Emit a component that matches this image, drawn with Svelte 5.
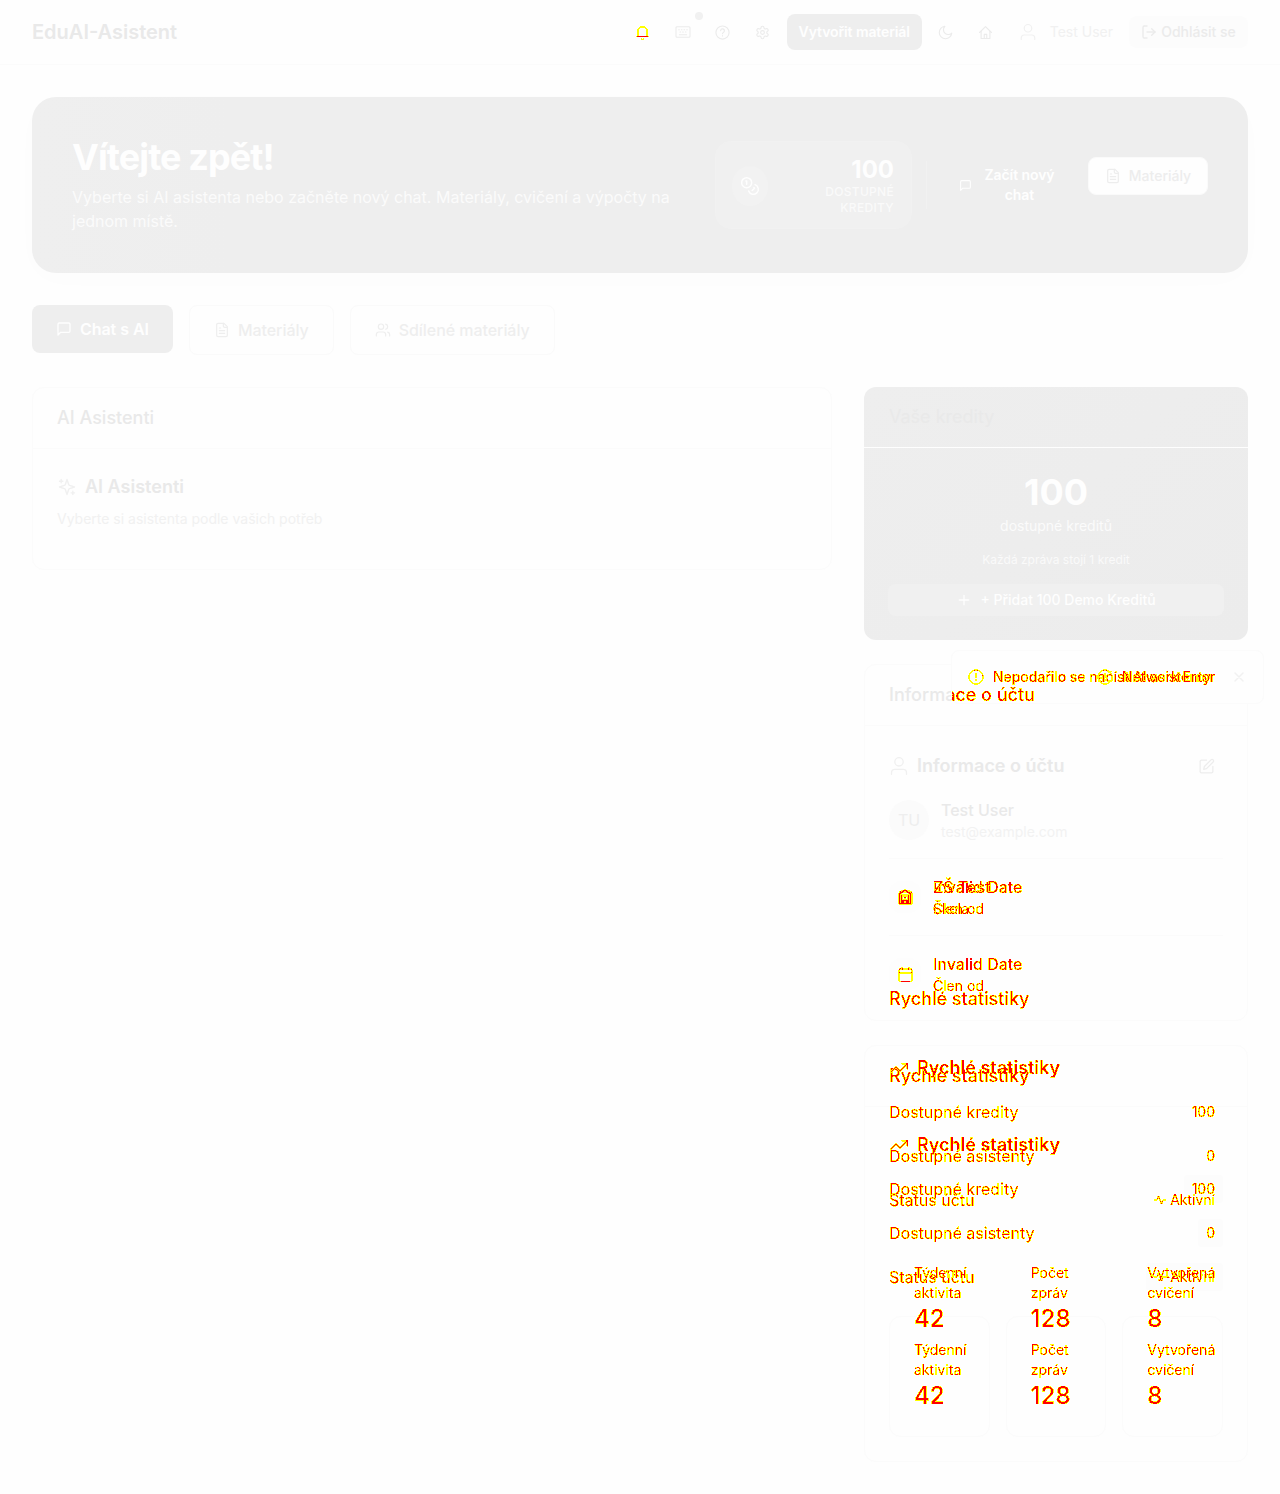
<script>
  const icons = {
    bell: ['M4.500 18.500V10.500a7.500 7.500 0 0 1 15 0v8', 'M2.500 18.500h19', 'M10 22a2.500 2.500 0 0 0 4 0'],
    keyboard: ['M3 4h18a1.5 1.5 0 0 1 1.500 1.500v13a1.500 1.500 0 0 1-1.500 1.500H3a1.500 1.500 0 0 1-1.500-1.500v-13A1.500 1.500 0 0 1 3 4z', 'M5.500 8.500h1M9.500 8.500h1M13.500 8.500h1M17.500 8.500h1M7.500 12h1M11.500 12h1M15.500 12h1M6.500 16h11'],
    help: ['M12 1.500a10.500 10.500 0 1 0 0 21a10.500 10.500 0 1 0 0-21', 'M9 9a3 3 0 0 1 6 .5c0 2-3 2.500-3 4.500', 'M12 17v.5'],
    settings: ['M12.220 2h-.440a2 2 0 0 0-2 2v.180a2 2 0 0 1-1 1.730l-.430.250a2 2 0 0 1-2 0l-.150-.080a2 2 0 0 0-2.730.730l-.220.380a2 2 0 0 0 .730 2.730l.150.100a2 2 0 0 1 1 1.720v.510a2 2 0 0 1-1 1.740l-.150.090a2 2 0 0 0-.730 2.730l.220.380a2 2 0 0 0 2.730.730l.150-.080a2 2 0 0 1 2 0l.430.250a2 2 0 0 1 1 1.730V20a2 2 0 0 0 2 2h.440a2 2 0 0 0 2-2v-.180a2 2 0 0 1 1-1.730l.430-.250a2 2 0 0 1 2 0l.150.080a2 2 0 0 0 2.730-.730l.220-.390a2 2 0 0 0-.730-2.730l-.150-.080a2 2 0 0 1-1-1.740v-.500a2 2 0 0 1 1-1.740l.150-.090a2 2 0 0 0 .730-2.730l-.220-.380a2 2 0 0 0-2.730-.730l-.150.080a2 2 0 0 1-2 0l-.430-.250a2 2 0 0 1-1-1.730V4a2 2 0 0 0-2-2z', 'M12 9a3 3 0 1 0 0 6a3 3 0 1 0 0-6'],
    moon: ['M11 2a7.500 7.500 0 0 0 11 11A10 10 0 1 1 11 2z'],
    home: ['M2.500 12L12 2.500L21.500 12', 'M5 10v11.500h14V10', 'M10 21v-6h4v6'],
    user: ['M12 2a5 5 0 1 0 0 10a5 5 0 1 0 0-10', 'M3 22v-2a4 4 0 0 1 4-4h10a4 4 0 0 1 4 4v2'],
    logout: ['M9 21H5a2 2 0 0 1-2-2V5a2 2 0 0 1 2-2h4', 'M16 17l5-5-5-5', 'M21 12H9'],
    coins: ['M8 2a6 6 0 1 0 0 12a6 6 0 1 0 0-12', 'M18.090 10.370A6 6 0 1 1 10.340 18', 'M7 6h1v4', 'M16.710 13.880l.700.710-2.820 2.820'],
    chat: ['M21 15a2 2 0 0 1-2 2H7l-4 4V5a2 2 0 0 1 2-2h14a2 2 0 0 1 2 2z'],
    file: ['M15 2H6a2 2 0 0 0-2 2v16a2 2 0 0 0 2 2h12a2 2 0 0 0 2-2V7z', 'M14 2v4a2 2 0 0 0 2 2h4', 'M10 9H8M16 13H8M16 17H8'],
    users: ['M16 21v-2a4 4 0 0 0-4-4H6a4 4 0 0 0-4 4v2', 'M9 3a4 4 0 1 0 0 8a4 4 0 1 0 0-8', 'M22 21v-2a4 4 0 0 0-3-3.870', 'M16 3.130a4 4 0 0 1 0 7.750'],
    sparkles: ['M12 3l1.900 5.800a2 2 0 0 0 1.300 1.300L21 12l-5.800 1.900a2 2 0 0 0-1.300 1.300L12 21l-1.900-5.800a2 2 0 0 0-1.300-1.300L3 12l5.800-1.900a2 2 0 0 0 1.300-1.300z', 'M5 3v4M3 5h4M19 17v4M17 19h4'],
    plus: ['M5 12h14M12 5v14'],
    edit: ['M12 3H5a2 2 0 0 0-2 2v14a2 2 0 0 0 2 2h14a2 2 0 0 0 2-2v-7', 'M18.400 2.600a2.100 2.100 0 0 1 3 3L12 15l-4 1 1-4z'],
    alert: ['M12 1.500a10.500 10.500 0 1 0 0 21a10.500 10.500 0 1 0 0-21', 'M12 7v6M12 16.500v.5'],
    close: ['M18 6L6 18M6 6l12 12'],
    calendar: ['M5 4h14a2 2 0 0 1 2 2v14a2 2 0 0 1-2 2H5a2 2 0 0 1-2-2V6a2 2 0 0 1 2-2z', 'M3 9.500h18M7.500 2v3M16.500 2v3'],
    building: ['M4 22V7l8-5 8 5v15z', 'M7 9v13M17 9v13M9 22v-5h6v5', 'M10 9h4M12 12v2'],
    trend: ['M22 7l-8.500 8.500-5-5L2 17', 'M16 7h6v6'],
    activity: ['M22 12h-4l-3 8L9 4l-3 8H2']
  };
  const stats = [['Týdenní aktivita', '42'], ['Počet zpráv', '128'], ['Vytvořená cvičení', '8']];
</script>

{#snippet icon(name, size = 16, weight = 2)}
  <svg class="icon" width={size} height={size} viewBox="0 0 24 24" stroke-width={weight}>
    {#each icons[name] as d}<path {d} />{/each}
  </svg>
{/snippet}

{#snippet statistics()}
  <div class="card-head"><span class="mark">Rychlé statistiky</span></div>
  <div class="card-body">
    <h3 class="mark">{@render icon('trend', 20, 1.6)}Rychlé statistiky</h3>
    <div class="facts">
      <div class="fact"><span class="mark">Dostupné kredity</span><b class="badge"><i class="mark">100</i></b></div>
      <div class="fact"><span class="mark">Dostupné asistenty</span><b class="badge"><i class="mark">0</i></b></div>
      <div class="fact"><span class="mark">Status účtu</span><b class="badge"><i class="mark">{@render icon('activity', 12)}Aktivní</i></b></div>
    </div>
    <div class="minis">
      {#each stats as [label, value]}
        <div class="mini"><div class="mark label">{label}</div><div class="mark value">{value}</div></div>
      {/each}
    </div>
  </div>
{/snippet}

<svg class="defs" width="0" height="0">
  <filter id="mark" x="-5%" y="-20%" width="110%" height="140%" color-interpolation-filters="sRGB">
    <feComponentTransfer in="SourceAlpha" result="solid">
      <feFuncA type="discrete" tableValues="0 1 1 1 1 1 1 1 1 1" />
    </feComponentTransfer>
    <feFlood flood-color="#ff0" />
    <feComposite in2="solid" operator="in" result="edge" />
    <feComponentTransfer in="SourceAlpha" result="inner">
      <feFuncA type="discrete" tableValues="0 0 0 0 0 0 0 0 1 1" />
    </feComponentTransfer>
    <feFlood flood-color="#f00" />
    <feComposite in2="inner" operator="in" result="core" />
    <feMerge><feMergeNode in="edge" /><feMergeNode in="core" /></feMerge>
  </filter>
</svg>

<header>
  <strong>EduAI-Asistent</strong>
  <nav>
    <span class="tool mark">{@render icon('bell', 15, 1.6)}</span>
    <span class="tool">{@render icon('keyboard', 16, 1.6)}<em class="dot"></em></span>
    <span class="tool">{@render icon('help', 15, 1.8)}</span>
    <span class="tool">{@render icon('settings', 15, 1.8)}</span>
    <button class="create">Vytvořit materiál</button>
    <span class="tool">{@render icon('moon', 15, 1.8)}</span>
    <span class="tool">{@render icon('home', 15, 1.8)}</span>
    <span class="account">{@render icon('user', 18, 1.6)}Test User</span>
    <button class="logout">{@render icon('logout')}Odhlásit se</button>
  </nav>
</header>

<main>
  <section class="hero">
    <div class="welcome">
      <h1>Vítejte zpět!</h1>
      <p>Vyberte si AI asistenta nebo začněte nový chat. Materiály, cvičení a výpočty na jednom místě.</p>
    </div>
    <div class="balance">
      <span class="coin">{@render icon('coins', 20, 1.8)}</span>
      <div><b>100</b><small>DOSTUPNÉ KREDITY</small></div>
    </div>
    <span class="rule"></span>
    <button class="start">{@render icon('chat', 13)}<span>Začít nový chat</span></button>
    <button class="materials">{@render icon('file', 16, 1.8)}Materiály</button>
  </section>

  <div class="tabs">
    <button class="tab active">{@render icon('chat')}Chat s AI</button>
    <button class="tab">{@render icon('file', 16, 1.8)}Materiály</button>
    <button class="tab">{@render icon('users', 16, 1.8)}Sdílené materiály</button>
  </div>

  <div class="columns">
    <section class="card assistants">
      <div class="card-head">AI Asistenti</div>
      <div class="card-body">
        <h3>{@render icon('sparkles', 20, 1.7)}AI Asistenti</h3>
        <p>Vyberte si asistenta podle vašich potřeb</p>
      </div>
    </section>

    <aside>
      <section class="credits">
        <div class="card-head">Vaše kredity</div>
        <div class="card-body">
          <b>100</b>
          <span>dostupné kreditů</span>
          <small>Každá zpráva stojí 1 kredit</small>
          <button>{@render icon('plus')}+ Přidat 100 Demo Kreditů</button>
        </div>
      </section>

      <section class="card">
        <div class="card-head">Informace o účtu</div>
        <div class="card-body">
          <div class="info-head"><h3>{@render icon('user', 20, 1.6)}Informace o účtu</h3>{@render icon('edit', 17, 1.8)}</div>
          <div class="profile">
            <span class="avatar">TU</span>
            <div><b>Test User</b><small>test@example.com</small></div>
          </div>
          <div class="detail">
            <span class="round stack"><i class="mark">{@render icon('calendar', 17, 1.4)}</i><i class="mark">{@render icon('building', 16, 2.6)}</i></span>
            <div>
              <b class="stack"><i class="mark">Invalid Date</i><i class="mark">ZŠ Test</i></b>
              <small class="stack"><i class="mark">Člen od</i><i class="mark">Škola</i></small>
            </div>
          </div>
          <div class="detail">
            <span class="round"><i class="mark">{@render icon('calendar', 17, 1.4)}</i></span>
            <div><b><i class="mark">Invalid Date</i></b><small><i class="mark">Člen od</i></small></div>
          </div>
        </div>
      </section>

      <section class="card statistics">
        {@render statistics()}
        <div class="echo">{@render statistics()}</div>
      </section>
    </aside>
  </div>
</main>

<div class="toast">
  <div class="hidden-title"><span class="mark">Informace o účtu</span></div>
  <div class="message mark">{@render icon('alert', 16, 1.5)}Nepodařilo se načíst AI asistenty.</div>
  <div class="message second mark">{@render icon('alert', 16, 1.5)}Network Error</div>
  {@render icon('close')}
</div>

<style>
  :global(body) { margin: 0; background: #fefefe; }
  :global(#app) { position: relative; height: 1494px; overflow: hidden; font: 400 14px/20px Inter, sans-serif; color: #e9e9e9; }
  * { box-sizing: border-box; }
  button { font: inherit; border: 0; padding: 0; color: inherit; background: none; display: flex; align-items: center; justify-content: center; }
  h1, h3, p { margin: 0; }
  i, em { font-style: normal; }
  .icon { fill: none; stroke: currentColor; stroke-linecap: round; stroke-linejoin: round; flex: none; display: block; }
  .defs { position: absolute; }
  .mark { color: #000; filter: url(#mark); }

  header { height: 65px; border-bottom: 1px solid #fbfbfb; padding: 0 32px; display: flex; align-items: center; justify-content: space-between; }
  header strong { font-size: 20px; font-weight: 600; line-height: 28px; }
  nav { display: flex; align-items: center; }
  .tool { width: 32px; height: 32px; margin-right: 8px; display: flex; align-items: center; justify-content: center; position: relative; }
  .tool:not(.mark) { color: #ebebeb; }
  .dot { position: absolute; right: -4px; top: -4px; width: 8px; height: 8px; border-radius: 50%; background: #f1f1f1; }
  .create { width: 135px; height: 36px; margin-right: 8px; border-radius: 8px; background: #eee; color: #fefefe; font-weight: 600; letter-spacing: -0.1px; }
  .account { display: flex; align-items: center; gap: 13px; margin: 0 16px 0 9px; color: #f1f1f1; }
  .logout { width: 119px; height: 32px; gap: 4px; border-radius: 8px; background: #fcfcfc; font-weight: 500; color: #ebebeb; }

  main { padding: 32px 32px 0; }
  .hero { height: 176px; padding: 40px; border-radius: 24px; display: flex; align-items: center; color: #fefefe; background: linear-gradient(90deg, #efefef, #eee 200px); box-shadow: 0 6px 30px rgba(0, 0, 0, 0.012); }
  .welcome { width: 602px; margin-right: 41px; flex: none; }
  h1 { font-size: 36px; line-height: 40px; letter-spacing: -0.9px; font-weight: 700; margin-bottom: 8px; }
  .welcome p { font-size: 16px; line-height: 24px; color: #fbfbfb; }
  .balance { width: 197px; height: 88px; padding: 2px 17px 0 16px; border: 1px solid #f1f1f1; border-radius: 16px; background: #f0f0f0; display: flex; align-items: center; justify-content: space-between; flex: none; text-align: right; }
  .coin { width: 36px; height: 40px; border-radius: 50%; background: #f2f2f2; display: flex; align-items: center; justify-content: center; }
  .balance b { display: block; font-size: 24px; line-height: 28px; font-weight: 700; }
  .balance small { display: block; width: 72px; font-size: 12px; line-height: 16px; font-weight: 500; letter-spacing: 0.3px; color: #fafafa; }
  .rule { width: 1px; height: 48px; background: #f1f1f1; margin: 0 32px 0 14px; flex: none; }
  .start { width: 97px; gap: 11px; font-weight: 600; flex: none; letter-spacing: -0.08px; }
  .start span { width: 74px; }
  .materials { width: 120px; height: 38px; margin: -19px 0 0 32px; gap: 8px; border: 1px solid #fafafa; border-radius: 8px; background: #fefefe; color: #ededed; font-weight: 500; flex: none; }

  .tabs { display: flex; align-items: flex-start; gap: 16px; margin: 32px 0; height: 50px; }
  .tab { height: 50px; padding: 0 24px; gap: 8px; border: 1px solid #fafafa; border-radius: 8px; font-size: 16px; font-weight: 500; letter-spacing: -0.05px; color: #eee; }
  .active { height: 48px; border: 0; background: #eee; color: #fefefe; font-weight: 600; }

  .columns { display: grid; grid-template-columns: 800px 384px; gap: 32px; align-items: start; }
  aside { display: flex; flex-direction: column; gap: 24px; }
  .card { border: 1px solid #fbfbfb; border-radius: 12px; }
  .card-head { height: 61px; padding: 0 24px; border-bottom: 1px solid #fbfbfb; display: flex; align-items: center; font-size: 18px; line-height: 28px; font-weight: 500; }
  .card-body { padding: 24px; }
  h3 { display: flex; align-items: center; gap: 8px; font-size: 18px; line-height: 28px; font-weight: 600; }
  h3:not(.mark) .icon { color: #f0f0f0; }
  .assistants p { margin: 8px 0 16px; color: #f1f1f1; }

  .credits { border-radius: 12px; background: linear-gradient(135deg, #eee, #ececec); color: #fefefe; text-align: center; }
  .credits .card-head { padding-left: 25px; color: #e9e9e9; border-color: #fefefe; font-weight: 400; }
  .credits b { display: block; font-size: 36px; line-height: 40px; font-weight: 700; }
  .credits span { display: block; margin-top: 4px; color: #fbfbfb; }
  .credits small { display: block; margin: 16px 0; font-size: 12px; line-height: 16px; color: #fafafa; }
  .credits button { width: 100%; height: 32px; gap: 8px; border-radius: 8px; background: #f0f0f0; font-weight: 500; }

  .info-head { height: 32px; display: flex; align-items: center; justify-content: space-between; padding-right: 8px; color: #e9e9e9; }
  .info-head > .icon { color: #ededed; }
  .profile { margin-top: 16px; padding-bottom: 16px; display: flex; align-items: center; gap: 12px; }
  .profile b, .profile small, .detail b, .detail small { display: block; font-size: 14px; line-height: 20px; font-weight: 400; }
  .profile b, .detail b { font-size: 16px; line-height: 24px; font-weight: 500; }
  .profile small { color: #f2f2f2; }
  .avatar { width: 40px; height: 40px; border-radius: 50%; background: #fbfbfb; display: grid; place-items: center; font-size: 16px; color: #eee; }
  .detail { display: flex; align-items: center; gap: 12px; padding: 16px 0; height: 77px; border-top: 1px solid #fbfbfb; }
  .detail:last-child { height: 61px; padding-bottom: 0; }
  .round { width: 32px; height: 32px; border-radius: 12px; background: #fdfdfd; display: grid; place-items: center; }
  .detail .stack { display: grid; justify-items: start; }
  .detail .round.stack { place-items: center; }
  .stack i { grid-area: 1 / 1; }

  .statistics { position: relative; }
  .statistics h3 { margin-bottom: 16px; }
  .facts { display: flex; flex-direction: column; gap: 16px; margin-bottom: 25px; }
  .fact { height: 28px; display: flex; align-items: center; justify-content: space-between; font-size: 16px; line-height: 24px; }
  .badge { height: 28px; padding: 0 8px; border-radius: 4px; background: #fcfcfc; font-size: 14px; font-weight: 400; display: flex; align-items: center; }
  .badge i { display: flex; align-items: center; gap: 4px; }
  .minis { display: grid; grid-template-columns: repeat(3, minmax(0, 1fr)); gap: 16px; }
  .mini { height: 121px; padding: 23px 0 0 24px; border: 1px solid #fbfbfb; border-radius: 12px; }
  .label { width: 72px; padding-right: 4px; height: 40px; }
  .value { font-size: 24px; line-height: 32px; width: max-content; font-weight: 500; }
  .echo { position: absolute; left: 0; right: 0; top: -77px; }
  .echo .card-head, .echo .mini { border-color: transparent; }
  .echo .badge { background: none; }

  .toast { position: absolute; left: 951px; top: 650px; width: 313px; height: 54px; border: 1px solid #fbfbfb; border-radius: 8px; background: #fefefe; display: flex; align-items: center; justify-content: flex-end; padding-right: 16px; color: #f1f1f1; box-shadow: 0 4px 12px rgba(0, 0, 0, 0.005); }
  .message { position: absolute; left: 16px; display: flex; align-items: center; gap: 9px; font-weight: 500; letter-spacing: -0.05px; white-space: nowrap; }
  .second { left: 145px; }
  .hidden-title { position: absolute; left: 0; top: 30px; width: 110px; overflow: hidden; font-size: 18px; line-height: 28px; font-weight: 500; }
  .hidden-title span { display: block; width: max-content; margin-left: -63px; }
</style>
